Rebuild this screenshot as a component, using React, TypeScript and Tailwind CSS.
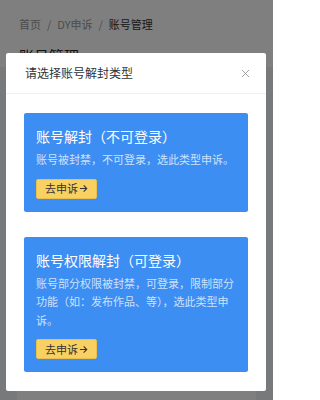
import React from "react";

const font = { fontFamily: '"Noto Sans CJK SC", "Noto Sans", sans-serif' };

function Card({ title, desc }: { title: string; desc: string }) {
  return (
    <div className="bg-[#3d8ef2] rounded-[2px] px-3 pt-3 pb-[13px]">
      <div className="text-[14px] leading-[22px] text-white">{title}</div>
      <div className="mt-[3px] text-[11px] leading-[18.5px] text-white/75">{desc}</div>
      <button className="mt-[10px] flex h-[20px] items-center rounded-[2px] border border-[#e9bf4e] bg-[#f9d062] px-[8px] text-[11px] leading-none text-[#333]">
        去申诉
        <svg width="9" height="9" viewBox="0 0 10 10" className="ml-[1px]" fill="none" stroke="#333" strokeWidth="1.2">
          <path d="M1 5h7.5M5.2 1.6 8.6 5 5.2 8.4" />
        </svg>
      </button>
    </div>
  );
}

export default function App() {
  return (
    <div className="relative h-[400px] w-[273px] overflow-hidden bg-[#f0f2f5]" style={font}>
      <div className="bg-white px-[19px] pt-[15px] pb-[8px]">
        <div className="flex items-center text-[11px] leading-[18px] text-[#999]">
          <span>首页</span>
          <span className="px-[6px]">/</span>
          <span>DY申诉</span>
          <span className="px-[6px]">/</span>
          <span className="text-[#333]">账号管理</span>
        </div>
      </div>
      <div className="bg-white px-[19px] pt-[4px]">
        <div className="text-[15px] leading-[22px] text-[#222]">账号管理</div>
      </div>
      <div className="mx-[17px] mt-2 h-[400px] bg-white" />

      <div className="absolute inset-0 bg-black/50" />

      <div className="absolute left-[6px] top-[53px] w-[260px] bg-white rounded-[2px]">
        <div className="flex h-[41px] items-center justify-between border-b border-[#f0f0f0] pl-[19px] pr-[16px]">
          <span className="text-[12px] text-[#333]">请选择账号解封类型</span>
          <svg width="9" height="9" viewBox="0 0 10 10" stroke="#999" strokeWidth="1" fill="none">
            <path d="M1 1l8 8M9 1l-8 8" />
          </svg>
        </div>
        <div className="flex flex-col gap-[25px] px-[18px] pt-[19px] pb-[19px]">
          <Card title="账号解封（不可登录）" desc="账号被封禁，不可登录，选此类型申诉。" />
          <Card
            title="账号权限解封（可登录）"
            desc="账号部分权限被封禁，可登录，限制部分功能（如：发布作品、等），选此类型申诉。"
          />
        </div>
      </div>
    </div>
  );
}
